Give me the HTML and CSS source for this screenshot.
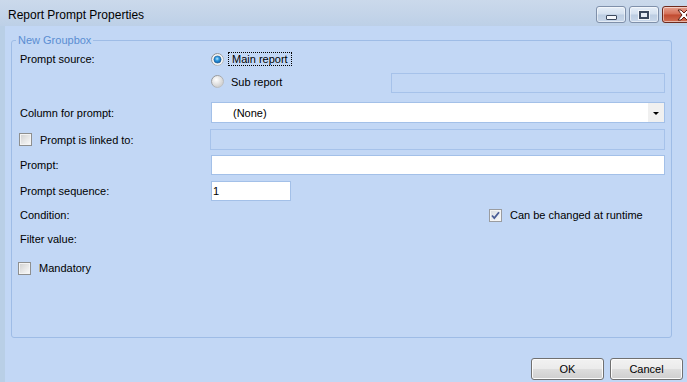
FILE: index.html
```html
<!DOCTYPE html>
<html>
<head>
<meta charset="utf-8">
<link rel="stylesheet" href="styles.css">
</head>
<body>
<div class="window">
  <div class="titlebar">
    <span class="title">Report Prompt Properties</span>
    <div class="capbtns">
      <div class="capbtn"><span class="min-ico"></span></div>
      <div class="capbtn"><span class="max-ico"></span></div>
      <div class="capbtn close">
        <svg width="18" height="12" viewBox="0 0 18 12"><path d="M3 1 L6 1 L9 4 L12 1 L15 1 L11 6 L15 11 L12 11 L9 8 L6 11 L3 11 L7 6 Z" fill="#fff" stroke="#5a1e12" stroke-width="1"/></svg>
      </div>
    </div>
  </div>
  <div class="content">
    <fieldset class="group">
      <legend>New Groupbox</legend>

      <div class="row r1">
        <div class="label">Prompt source:</div>
        <div class="radio-item">
          <svg class="radio" width="13" height="13" viewBox="0 0 13 13">
            <defs>
              <linearGradient id="ring" x1="0" y1="0" x2="1" y2="1"><stop offset="0" stop-color="#7f8286"/><stop offset="1" stop-color="#c2c6cb"/></linearGradient>
              <radialGradient id="dot" cx="0.45" cy="0.4" r="0.6"><stop offset="0" stop-color="#bfe8ff"/><stop offset="0.45" stop-color="#2f9be0"/><stop offset="1" stop-color="#0e5aa8"/></radialGradient>
            </defs>
            <circle cx="6.5" cy="6.5" r="6" fill="#f4f4f4" stroke="url(#ring)" stroke-width="1"/>
            <circle cx="6.5" cy="6.5" r="3.6" fill="url(#dot)" stroke="#1c5c94" stroke-width="0.6"/>
          </svg>
          <span class="focus">Main report</span>
        </div>
      </div>

      <div class="row r2">
        <div class="label"></div>
        <div class="radio-item sub">
          <svg class="radio" width="13" height="13" viewBox="0 0 13 13">
            <defs>
              <linearGradient id="ring2" x1="0" y1="0" x2="1" y2="1"><stop offset="0" stop-color="#8a8d91"/><stop offset="1" stop-color="#c8ccd0"/></linearGradient>
              <radialGradient id="fill2" cx="0.4" cy="0.35" r="0.7"><stop offset="0" stop-color="#ffffff"/><stop offset="1" stop-color="#c9c9c9"/></radialGradient>
            </defs>
            <circle cx="6.5" cy="6.5" r="6" fill="url(#fill2)" stroke="url(#ring2)" stroke-width="1"/>
          </svg>
          <span class="radio-text">Sub report</span>
        </div>
        <div class="textbox disabled grow"></div>
      </div>

      <div class="row r3">
        <div class="label">Column for prompt:</div>
        <div class="combo grow">
          <span class="combo-text">(None)</span>
          <span class="combo-btn"><span class="tri"></span></span>
        </div>
      </div>

      <div class="row r4">
        <div class="label check-label"><span class="checkbox"></span><span>Prompt is linked to:</span></div>
        <div class="textbox disabled grow tall"></div>
      </div>

      <div class="row r5">
        <div class="label">Prompt:</div>
        <div class="textbox grow"></div>
      </div>

      <div class="row r6">
        <div class="label">Prompt sequence:</div>
        <div class="textbox seq">1</div>
      </div>

      <div class="row r7">
        <div class="label">Condition:</div>
        <div class="runtime">
          <span class="checkbox checked">
            <svg width="11" height="11" viewBox="0 0 11 11"><path d="M2 5.5 L4.3 8 L9 2.2" fill="none" stroke="#4a5d96" stroke-width="1.8"/></svg>
          </span>
          <span>Can be changed at runtime</span>
        </div>
      </div>

      <div class="row r8">
        <div class="label">Filter value:</div>
      </div>

      <div class="row r9">
        <div class="label check-label mand"><span class="checkbox"></span><span>Mandatory</span></div>
      </div>
    </fieldset>

    <div class="footer">
      <button class="btn">OK</button>
      <button class="btn">Cancel</button>
    </div>
  </div>
</div>
</body>
</html>
```
FILE: styles.css
```css
html, body {
  margin: 0;
  padding: 0;
}
body {
  width: 687px;
  height: 382px;
  overflow: hidden;
  font-family: "Liberation Sans", Arial, sans-serif;
  font-size: 11px;
  color: #000;
  background: #c2d7f5;
}
.window {
  width: 687px;
  height: 382px;
  display: flex;
  flex-direction: column;
}
.titlebar {
  height: 26px;
  flex: none;
  display: flex;
  align-items: flex-start;
  background: linear-gradient(#cbd9eb, #bdd0e7);
}
.title {
  margin: 8px 0 0 8px;
  font-size: 12px;
  line-height: 14px;
  color: #000;
}
.capbtns {
  margin-left: auto;
  margin-top: 6px;
  display: flex;
  gap: 3px;
  margin-right: -18px;
}
.capbtn {
  width: 28px;
  height: 15px;
  border: 1px solid #7f90aa;
  border-radius: 3px;
  background: linear-gradient(#e6eef8 0%, #d3e0ef 48%, #bccde2 52%, #c8d7ea 100%);
  display: flex;
  align-items: center;
  justify-content: center;
  box-shadow: inset 0 0 0 1px rgba(255,255,255,0.5);
}
.capbtn.close {
  width: 41px;
  border-color: #6e2a1d;
  background: linear-gradient(#e6a18f 0%, #d46e56 48%, #c04a30 52%, #d16e52 100%);
}
.min-ico {
  width: 9px;
  height: 3px;
  margin-top: 5px;
  background: #f4f7fb;
  border: 1px solid #3d4a5e;
  border-radius: 1px;
}
.max-ico {
  width: 6px;
  height: 4px;
  border: 2px solid #3d4a5e;
  background: #e8eef6;
  outline: 1px solid #f2f6fb;
}
.content {
  flex: 1;
  border-left: 5px solid #b9cfe6;
  padding: 8px 4px 0 6px;
  display: flex;
  flex-direction: column;
}
.group {
  margin: 0;
  padding: 2px 6px 59px 8px;
  border: 1px solid #9ebce6;
  border-radius: 3px;
  width: 661px;
  box-sizing: border-box;
  min-width: 0;
}
.group legend {
  padding: 0 2px;
  margin-left: -4px;
  color: #5a8ed2;
  line-height: 13px;
  font-size: 11px;
}
.row {
  display: flex;
  align-items: center;
  height: 20px;
}
.r2 { margin-top: 4px; }
.r3 { margin-top: 9px; height: 21px; }
.r4 { margin-top: 6px; height: 21px; }
.r5 { margin-top: 5px; }
.r6 { margin-top: 6px; }
.r7 { margin-top: 4px; }
.r8 { margin-top: 4px; }
.r9 { margin-top: 9px; }
.label {
  width: 191px;
  flex: none;
  white-space: nowrap;
}
.grow { flex: 1; }
.radio-item {
  display: flex;
  align-items: center;
  width: 180px;
  flex: none;
}
.radio-item.sub {
  align-self: flex-start;
  margin-top: 2px;
}
.radio { flex: none; }
.focus {
  margin-left: 4px;
  padding: 0 0 0 3px;
  border: 1px dotted #000;
  line-height: 12px;
  width: 59px;
}
.radio-text {
  margin-left: 7px;
}
.textbox {
  height: 20px;
  box-sizing: border-box;
  border: 1px solid #a3c0e8;
  background: #fff;
  padding-left: 1px;
  line-height: 18px;
}
.textbox.disabled {
  background: #c2d7f5;
  border-color: #a6c2ea;
}
.textbox.tall { height: 21px; }
.textbox.seq { width: 80px; flex: none; }
.combo {
  height: 21px;
  box-sizing: border-box;
  border: 1px solid #a3c0e8;
  background: #fff;
  display: flex;
  align-items: center;
}
.combo-text {
  padding-left: 21px;
}
.combo-btn {
  margin-left: auto;
  width: 16px;
  height: 19px;
  background: #f0f0f0;
  display: flex;
  align-items: center;
  justify-content: center;
}
.tri {
  width: 0;
  height: 0;
  border-left: 3px solid transparent;
  border-right: 3px solid transparent;
  border-top: 3px solid #000;
  margin-top: 1px;
}
.check-label {
  display: flex;
  align-items: center;
  margin-left: -1px;
}
.check-label.mand { margin-left: -2px; }
.checkbox {
  width: 11px;
  height: 11px;
  flex: none;
  border: 1px solid #8e8f8f;
  background: linear-gradient(135deg, #cfcfcf 0%, #e6e6e6 50%, #fbfbfb 100%);
  box-shadow: inset 0 0 0 1px #f4f4f4;
  margin-right: 8px;
  display: flex;
  align-items: center;
  justify-content: center;
}
.checkbox.checked {
  background: linear-gradient(135deg, #d8dbe0 0%, #eceef1 60%, #fafafa 100%);
  border-color: #9a9ca0;
}
.runtime {
  margin-left: 278px;
  display: flex;
  align-items: center;
}
.runtime .checkbox { margin-right: 8px; }
.footer {
  margin-top: 20px;
  display: flex;
  justify-content: flex-end;
  gap: 6px;
}
.btn {
  width: 73px;
  height: 22px;
  border: 1px solid #707070;
  border-radius: 3px;
  background: linear-gradient(#f2f2f2 0%, #ebebeb 48%, #dddddd 52%, #cfcfcf 100%);
  box-shadow: inset 0 0 0 1px #fbfbfb;
  font-family: "Liberation Sans", Arial, sans-serif;
  font-size: 11px;
  color: #000;
  padding: 0;
}
```
